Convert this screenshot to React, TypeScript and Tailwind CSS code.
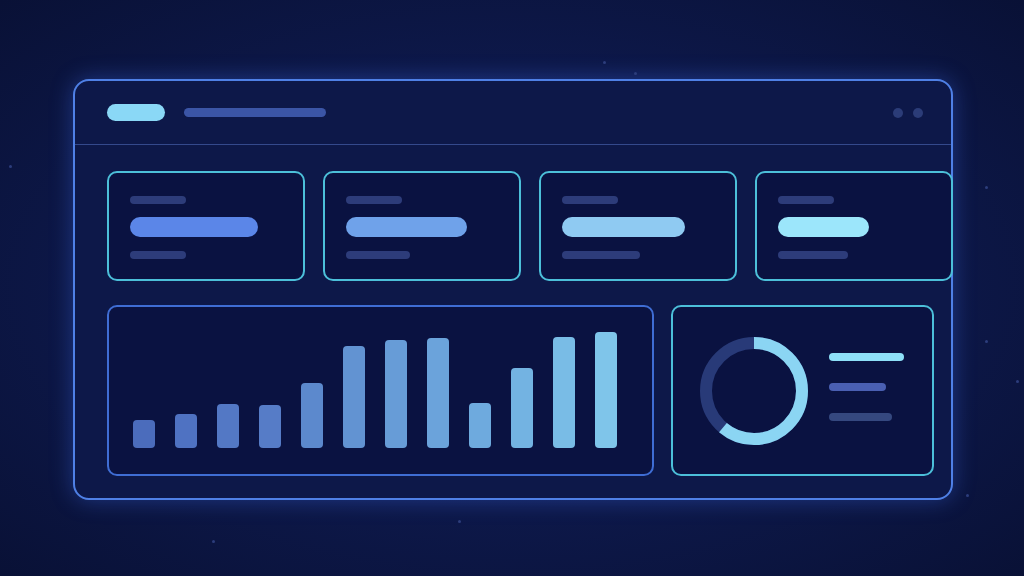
const bars = [
  { h: 28, c: '#4b6cbc' },
  { h: 34, c: '#4f72c2' },
  { h: 44, c: '#5378c5' },
  { h: 43, c: '#567cc7' },
  { h: 65, c: '#5c89cd' },
  { h: 102, c: '#6293d2' },
  { h: 108, c: '#679cd7' },
  { h: 110, c: '#6ba3db' },
  { h: 45, c: '#6eaade' },
  { h: 80, c: '#73b3e2' },
  { h: 111, c: '#79bce6' },
  { h: 116, c: '#7fc5ea' },
]

const stats = [
  { big: 'w-[128px] bg-[#5b86e8]', bottom: 'w-[56px]' },
  { big: 'w-[121px] bg-[#6fa2ea]', bottom: 'w-[64px]' },
  { big: 'w-[123px] bg-[#8fcaf2]', bottom: 'w-[78px]' },
  { big: 'w-[91px] bg-[#9ce6fb]', bottom: 'w-[70px]' },
]

const stars = [
  'left-[603px] top-[61px]',
  'left-[634px] top-[72px]',
  'left-[9px] top-[165px]',
  'left-[985px] top-[186px]',
  'left-[985px] top-[340px]',
  'left-[1016px] top-[380px]',
  'left-[458px] top-[520px]',
  'left-[212px] top-[540px]',
  'left-[966px] top-[494px]',
]

function Donut() {
  const r = 48
  const c = 2 * Math.PI * r
  const frac = 220 / 360
  return (
    <svg width="110" height="110" viewBox="0 0 110 110" className="shrink-0">
      <circle cx="55" cy="55" r={r} fill="none" stroke="#283a78" strokeWidth="12" />
      <circle
        cx="55"
        cy="55"
        r={r}
        fill="none"
        stroke="#8bd5f3"
        strokeWidth="12"
        strokeDasharray={`${c * frac} ${c}`}
        transform="rotate(-90 55 55)"
      />
    </svg>
  )
}

export default function App() {
  return (
    <div className="relative h-[576px] w-full overflow-hidden bg-[radial-gradient(ellipse_at_center,#12205c_0%,#0d1849_55%,#091136_100%)] pl-[73px] pt-[79px]">
      {stars.map((s) => (
        <span key={s} className={`absolute h-[3px] w-[3px] rounded-full bg-[#2c3d7c] ${s}`} />
      ))}

      <div className="flex h-[421px] w-[880px] flex-col rounded-[16px] border-2 border-[#4f80e6] bg-[#0d1849] shadow-[0_0_22px_rgba(70,120,255,0.35)]">
        <div className="flex h-[64px] shrink-0 items-center border-b border-[#34498c] pl-[32px] pr-[28px]">
          <div className="h-[17px] w-[58px] rounded-full bg-[#8ad8f6]" />
          <div className="ml-[19px] h-[9px] w-[142px] rounded-full bg-[#3b55a6]" />
          <div className="ml-auto flex gap-[10px]">
            <div className="h-[10px] w-[10px] rounded-full bg-[#2b3c78]" />
            <div className="h-[10px] w-[10px] rounded-full bg-[#2b3c78]" />
          </div>
        </div>

        <div className="mt-[26px] flex gap-[18px] pl-[32px]">
          {stats.map((s, i) => (
            <div
              key={i}
              className="flex h-[110px] w-[198px] shrink-0 flex-col rounded-[10px] border-2 border-[#4cbfd9] bg-[#0a1241] pl-[21px] pt-[23px]"
            >
              <div className="h-[8px] w-[56px] rounded-full bg-[#2d3c7a]" />
              <div className={`mt-[13px] h-[20px] rounded-full ${s.big}`} />
              <div className={`mt-[14px] h-[8px] rounded-full bg-[#2d3c7a] ${s.bottom}`} />
            </div>
          ))}
        </div>

        <div className="mt-[24px] flex gap-[17px] pl-[32px]">
          <div className="flex h-[171px] w-[547px] items-end gap-[20px] rounded-[10px] border-2 border-[#3f6dd4] bg-[#0a1241] pb-[26px] pl-[24px]">
            {bars.map((b, i) => (
              <div
                key={i}
                className="w-[22px] rounded-[4px]"
                style={{ height: b.h, backgroundColor: b.c }}
              />
            ))}
          </div>

          <div className="flex h-[171px] w-[263px] items-center rounded-[10px] border-2 border-[#4cbfd9] bg-[#0a1241] pl-[26px]">
            <Donut />
            <div className="-mt-[8px] ml-[20px] flex flex-col gap-[22px]">
              <div className="h-[8px] w-[75px] rounded-full bg-[#8ee0f8]" />
              <div className="h-[8px] w-[57px] rounded-full bg-[#4a5fb2]" />
              <div className="h-[8px] w-[63px] rounded-full bg-[#35487f]" />
            </div>
          </div>
        </div>
      </div>
    </div>
  )
}
